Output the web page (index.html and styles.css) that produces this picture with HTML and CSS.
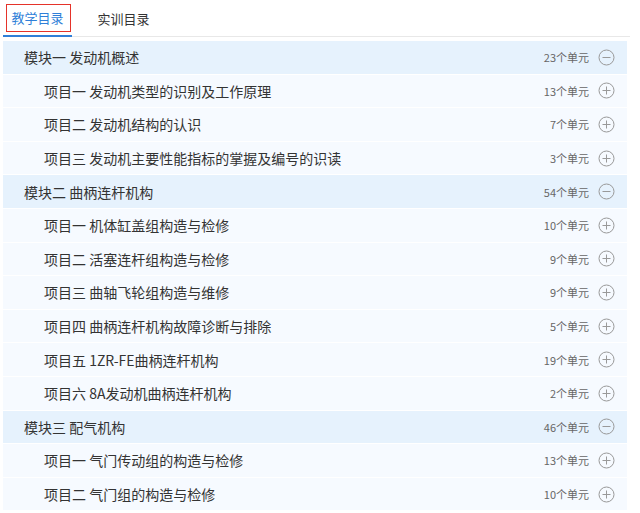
FILE: index.html
```html
<!DOCTYPE html>
<html lang="zh-CN">
<head>
    <meta charset="UTF-8">
    <meta name="viewport" content="width=device-width, initial-scale=1.0">
    <title>课程目录</title>
    <link rel="stylesheet" href="styles.css">
</head>
<body>

    <div class="catalog-box">
        <div class="tabs">
            <div class="tab active"><span class="tab-label">教学目录</span></div>
            <div class="tab"><span class="tab-label">实训目录</span></div>
        </div>

        <ul class="catalog">
            <li class="row module">
                <span class="title">模块一 发动机概述</span>
                <span class="count">23个单元</span>
                <svg class="toggle" viewBox="0 0 17 17"><circle cx="8.5" cy="8.5" r="7.5"/><line x1="4.5" y1="8.5" x2="12.5" y2="8.5"/></svg>
            </li>
            <li class="row item">
                <span class="title">项目一 发动机类型的识别及工作原理</span>
                <span class="count">13个单元</span>
                <svg class="toggle" viewBox="0 0 17 17"><circle cx="8.5" cy="8.5" r="7.5"/><line x1="4.5" y1="8.5" x2="12.5" y2="8.5"/><line x1="8.5" y1="4.5" x2="8.5" y2="12.5"/></svg>
            </li>
            <li class="row item">
                <span class="title">项目二 发动机结构的认识</span>
                <span class="count">7个单元</span>
                <svg class="toggle" viewBox="0 0 17 17"><circle cx="8.5" cy="8.5" r="7.5"/><line x1="4.5" y1="8.5" x2="12.5" y2="8.5"/><line x1="8.5" y1="4.5" x2="8.5" y2="12.5"/></svg>
            </li>
            <li class="row item">
                <span class="title">项目三 发动机主要性能指标的掌握及编号的识读</span>
                <span class="count">3个单元</span>
                <svg class="toggle" viewBox="0 0 17 17"><circle cx="8.5" cy="8.5" r="7.5"/><line x1="4.5" y1="8.5" x2="12.5" y2="8.5"/><line x1="8.5" y1="4.5" x2="8.5" y2="12.5"/></svg>
            </li>

            <li class="row module">
                <span class="title">模块二 曲柄连杆机构</span>
                <span class="count">54个单元</span>
                <svg class="toggle" viewBox="0 0 17 17"><circle cx="8.5" cy="8.5" r="7.5"/><line x1="4.5" y1="8.5" x2="12.5" y2="8.5"/></svg>
            </li>
            <li class="row item">
                <span class="title">项目一 机体缸盖组构造与检修</span>
                <span class="count">10个单元</span>
                <svg class="toggle" viewBox="0 0 17 17"><circle cx="8.5" cy="8.5" r="7.5"/><line x1="4.5" y1="8.5" x2="12.5" y2="8.5"/><line x1="8.5" y1="4.5" x2="8.5" y2="12.5"/></svg>
            </li>
            <li class="row item">
                <span class="title">项目二 活塞连杆组构造与检修</span>
                <span class="count">9个单元</span>
                <svg class="toggle" viewBox="0 0 17 17"><circle cx="8.5" cy="8.5" r="7.5"/><line x1="4.5" y1="8.5" x2="12.5" y2="8.5"/><line x1="8.5" y1="4.5" x2="8.5" y2="12.5"/></svg>
            </li>
            <li class="row item">
                <span class="title">项目三 曲轴飞轮组构造与维修</span>
                <span class="count">9个单元</span>
                <svg class="toggle" viewBox="0 0 17 17"><circle cx="8.5" cy="8.5" r="7.5"/><line x1="4.5" y1="8.5" x2="12.5" y2="8.5"/><line x1="8.5" y1="4.5" x2="8.5" y2="12.5"/></svg>
            </li>
            <li class="row item">
                <span class="title">项目四 曲柄连杆机构故障诊断与排除</span>
                <span class="count">5个单元</span>
                <svg class="toggle" viewBox="0 0 17 17"><circle cx="8.5" cy="8.5" r="7.5"/><line x1="4.5" y1="8.5" x2="12.5" y2="8.5"/><line x1="8.5" y1="4.5" x2="8.5" y2="12.5"/></svg>
            </li>
            <li class="row item">
                <span class="title">项目五 1ZR-FE曲柄连杆机构</span>
                <span class="count">19个单元</span>
                <svg class="toggle" viewBox="0 0 17 17"><circle cx="8.5" cy="8.5" r="7.5"/><line x1="4.5" y1="8.5" x2="12.5" y2="8.5"/><line x1="8.5" y1="4.5" x2="8.5" y2="12.5"/></svg>
            </li>
            <li class="row item">
                <span class="title">项目六 8A发动机曲柄连杆机构</span>
                <span class="count">2个单元</span>
                <svg class="toggle" viewBox="0 0 17 17"><circle cx="8.5" cy="8.5" r="7.5"/><line x1="4.5" y1="8.5" x2="12.5" y2="8.5"/><line x1="8.5" y1="4.5" x2="8.5" y2="12.5"/></svg>
            </li>

            <li class="row module">
                <span class="title">模块三 配气机构</span>
                <span class="count">46个单元</span>
                <svg class="toggle" viewBox="0 0 17 17"><circle cx="8.5" cy="8.5" r="7.5"/><line x1="4.5" y1="8.5" x2="12.5" y2="8.5"/></svg>
            </li>
            <li class="row item">
                <span class="title">项目一 气门传动组的构造与检修</span>
                <span class="count">13个单元</span>
                <svg class="toggle" viewBox="0 0 17 17"><circle cx="8.5" cy="8.5" r="7.5"/><line x1="4.5" y1="8.5" x2="12.5" y2="8.5"/><line x1="8.5" y1="4.5" x2="8.5" y2="12.5"/></svg>
            </li>
            <li class="row item">
                <span class="title">项目二 气门组的构造与检修</span>
                <span class="count">10个单元</span>
                <svg class="toggle" viewBox="0 0 17 17"><circle cx="8.5" cy="8.5" r="7.5"/><line x1="4.5" y1="8.5" x2="12.5" y2="8.5"/><line x1="8.5" y1="4.5" x2="8.5" y2="12.5"/></svg>
            </li>
        </ul>
    </div>

</body>
</html>
```

FILE: styles.css
```css
body {
    margin: 0;
    background-color: #fff;
    font-family: "Noto Sans CJK SC", "Microsoft YaHei", sans-serif;
    color: #333;
}
.catalog-box {
    width: 624px;
    margin-left: 3px;
}
.tabs {
    display: flex;
    height: 36px;
    border-bottom: 1px solid #e8e8e8;
    width: 627px;
}
.tab {
    display: flex;
    align-items: center;
    justify-content: center;
    width: 69px;
    height: 36px;
    margin-right: 17px;
    font-size: 13px;
    color: #333;
    box-sizing: border-box;
    padding-top: 1px;
}
.tab.active {
    color: #2f7fd8;
    border-bottom: 2px solid #2f7fd8;
    height: 37px;
    margin-bottom: -1px;
}
.tab.active .tab-label {
    border: 1px solid #e5332a;
    padding: 3px 6px 3px 4px;
    margin-top: -1px;
    margin-left: 2px;
    line-height: 20px;
}
.catalog {
    list-style: none;
    margin: 4px 0 0;
    padding: 0;
}
.row {
    display: flex;
    align-items: center;
    height: 32.6px;
    border-bottom: 1px solid #fff;
    padding-right: 12px;
}
.row.module {
    background-color: #e6f2fd;
    padding-left: 21px;
}
.row.item {
    background-color: #f6faff;
    padding-left: 41px;
}
.title {
    flex: 1;
    font-size: 14px;
    color: #333;
}
.count {
    font-size: 11px;
    color: #666;
    margin-right: 9px;
}
.toggle {
    width: 17px;
    height: 17px;
    fill: none;
    stroke: #999;
    stroke-width: 1;
}
```
